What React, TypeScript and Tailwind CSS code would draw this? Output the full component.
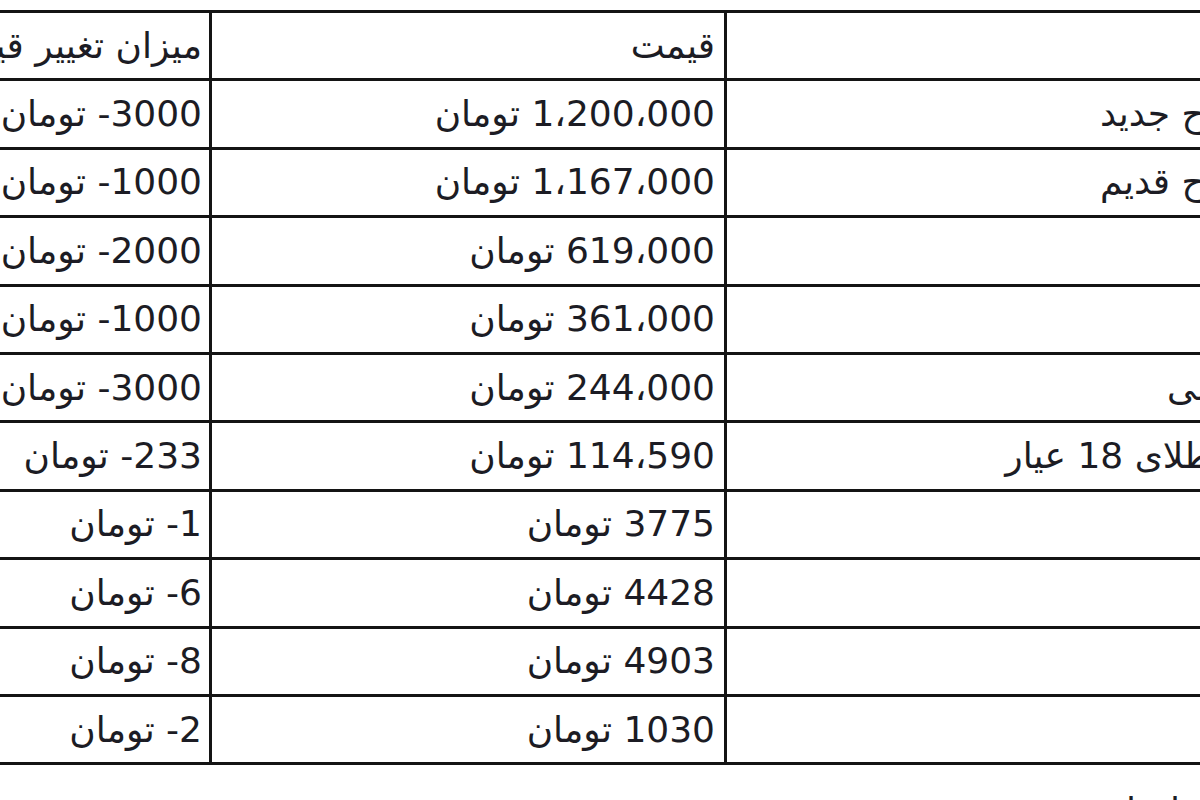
import React from 'react'

type Row = { name: string; price: string; change: string }

const rows: Row[] = [
    { name: 'سکه طرح جدید', price: '1،200،000 تومان', change: '3000- تومان' },
    { name: 'سکه طرح قدیم', price: '1،167،000 تومان', change: '1000- تومان' },
    { name: 'نیم سکه', price: '619،000 تومان', change: '2000- تومان' },
    { name: 'ربع سکه', price: '361،000 تومان', change: '1000- تومان' },
    { name: 'سکه گرمی', price: '244،000 تومان', change: '3000- تومان' },
    { name: 'هر گرم طلای 18 عیار', price: '114،590 تومان', change: '233- تومان' },
    { name: '', price: '3775 تومان', change: '1- تومان' },
    { name: '', price: '4428 تومان', change: '6- تومان' },
    { name: '', price: '4903 تومان', change: '8- تومان' },
    { name: '', price: '1030 تومان', change: '2- تومان' },
]

function Cell({ text, className }: { text: string; className: string }) {
    return (
        <div className={`flex h-full items-center justify-end overflow-hidden whitespace-nowrap ${className}`}>
            <span dir="rtl">{text}</span>
        </div>
    )
}

function TableRow({ name, price, change }: Row) {
    return (
        <div className="grid h-[68.4px] grid-cols-[281px_515px_612px] border-b-[3px] border-[#141414]">
            <Cell text={change} className="pr-[7px]" />
            <Cell text={price} className="border-l-[3px] border-[#141414] pr-[9px]" />
            <Cell text={name} className="border-l-[3px] border-[#141414] pr-[2px]" />
        </div>
    )
}

export default function App() {
    return (
        <div
            className="h-[800px] w-[1200px] overflow-hidden bg-white text-[36px] text-[#1c1c24]"
            style={{ fontFamily: '"DejaVu Sans", Tahoma, sans-serif' }}
        >
            <div className="ml-[-72px] mt-[10px] w-[1408px] border-t-[3px] border-[#141414]">
                <TableRow name="" price="قیمت" change="میزان تغییر قیمت" />
                {rows.map((r, i) => (
                    <TableRow key={i} {...r} />
                ))}
            </div>
            <div dir="rtl" className="mt-[19px] pr-[20px] text-right whitespace-nowrap">
                اخبار
            </div>
        </div>
    )
}
